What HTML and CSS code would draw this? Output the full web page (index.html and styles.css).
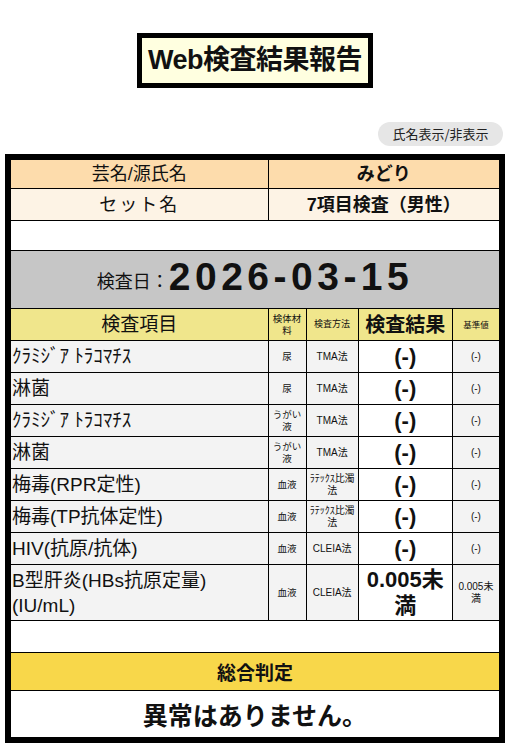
FILE: index.html
```html
<!DOCTYPE html>
<html lang="ja">
<head>
<meta charset="utf-8">
<title>Web検査結果報告</title>
<link rel="stylesheet" href="styles.css">
</head>
<body>
<header class="title-wrap">
  <h1 class="title">Web検査結果報告</h1>
</header>
<div class="toggle-wrap">
  <button class="toggle" type="button">氏名表示/非表示</button>
</div>
<div class="report">
  <table class="grid">
    <colgroup>
      <col class="c-item"><col class="c-sample"><col class="c-method"><col class="c-result"><col class="c-ref">
    </colgroup>
    <tbody>
      <tr class="r-name">
        <td class="lbl">芸名/源氏名</td>
        <td colspan="4" class="val">みどり</td>
      </tr>
      <tr class="r-set">
        <td class="lbl spaced">セット名</td>
        <td colspan="4" class="val">7項目検査（男性）</td>
      </tr>
      <tr class="r-blank"><td colspan="5"></td></tr>
      <tr class="r-date">
        <td colspan="5"><span class="date-lbl">検査日：</span><span class="date">2026-03-15</span></td>
      </tr>
      <tr class="r-head">
        <th class="h-item">検査項目</th>
        <th class="h-sample">検体材料</th>
        <th class="h-method">検査方法</th>
        <th class="h-result">検査結果</th>
        <th class="h-tiny">基準値</th>
      </tr>
      <tr class="r-data">
        <td class="item">ｸﾗﾐｼﾞｱ ﾄﾗｺﾏﾁｽ</td><td class="sm">尿</td><td class="md">TMA法</td><td class="res">(-)</td><td class="ref">(-)</td>
      </tr>
      <tr class="r-data">
        <td class="item">淋菌</td><td class="sm">尿</td><td class="md">TMA法</td><td class="res">(-)</td><td class="ref">(-)</td>
      </tr>
      <tr class="r-data">
        <td class="item">ｸﾗﾐｼﾞｱ ﾄﾗｺﾏﾁｽ</td><td class="sm">うがい液</td><td class="md">TMA法</td><td class="res">(-)</td><td class="ref">(-)</td>
      </tr>
      <tr class="r-data">
        <td class="item">淋菌</td><td class="sm">うがい液</td><td class="md">TMA法</td><td class="res">(-)</td><td class="ref">(-)</td>
      </tr>
      <tr class="r-data">
        <td class="item">梅毒(RPR定性)</td><td class="sm">血液</td><td class="md">ﾗﾃｯｸｽ比濁法</td><td class="res">(-)</td><td class="ref">(-)</td>
      </tr>
      <tr class="r-data">
        <td class="item">梅毒(TP抗体定性)</td><td class="sm">血液</td><td class="md">ﾗﾃｯｸｽ比濁法</td><td class="res">(-)</td><td class="ref">(-)</td>
      </tr>
      <tr class="r-data">
        <td class="item">HIV(抗原/抗体)</td><td class="sm">血液</td><td class="md">CLEIA法</td><td class="res">(-)</td><td class="ref">(-)</td>
      </tr>
      <tr class="r-data r-tall">
        <td class="item">B型肝炎(HBs抗原定量)(IU/mL)</td><td class="sm">血液</td><td class="md">CLEIA法</td><td class="res">0.005未満</td><td class="ref">0.005未満</td>
      </tr>
      <tr class="r-blank2"><td colspan="5"></td></tr>
      <tr class="r-judge"><td colspan="5">総合判定</td></tr>
      <tr class="r-verdict"><td colspan="5">異常はありません。</td></tr>
    </tbody>
  </table>
</div>
</body>
</html>
```
FILE: styles.css
```css
html, body {
  margin: 0;
  padding: 0;
  background: #fff;
}
body {
  font-family: "Liberation Sans", "Noto Sans CJK JP", sans-serif;
  color: #111;
  padding: 33px 5px 0 5px;
}
.title-wrap {
  display: flex;
  justify-content: center;
}
.title {
  margin: 0;
  box-sizing: border-box;
  width: 236px;
  height: 55px;
  border: 5px solid #000;
  background: #ffffe0;
  font-size: 27px;
  font-weight: bold;
  line-height: 45px;
  text-align: center;
  white-space: nowrap;
  letter-spacing: -0.5px;
}
.toggle-wrap {
  display: flex;
  justify-content: flex-end;
  margin-top: 34px;
  padding-right: 2px;
}
.toggle {
  font-family: "Noto Sans CJK JP", sans-serif;
  font-size: 13px;
  color: #222;
  background: #e6e6e6;
  border: none;
  border-radius: 12px;
  height: 24px;
  width: 125px;
  padding: 0;
  line-height: 24px;
}
.report {
  margin-top: 8px;
  border: 5px solid #000;
}
.grid {
  width: 100%;
  border-collapse: collapse;
  table-layout: fixed;
}
.c-item { width: 257px; }
.c-sample { width: 38px; }
.c-method { width: 52px; }
.c-result { width: 94px; }
.c-ref { width: 47px; }
.grid td, .grid th {
  border: 1px solid #000;
  padding: 0 1px;
  text-align: center;
  vertical-align: middle;
  font-weight: normal;
}
.r-name td {
  background: #fddcac;
  height: 28px;
  font-size: 18px;
  line-height: 22px;
}
.r-set td {
  background: #fdf3e5;
  height: 31px;
  font-size: 18px;
  line-height: 22px;
}
.grid .val { font-weight: bold; }
.spaced { letter-spacing: 2px; }
.r-blank td { height: 29px; background: #fff; }
.r-date td {
  background: #c6c6c6;
  height: 55px;
  line-height: 40px;
  padding-top: 2px;
}
.date-lbl {
  font-size: 18px;
  vertical-align: 2px;
}
.date {
  font-size: 39px;
  font-weight: bold;
  letter-spacing: 4.5px;
}
.r-head th {
  background: #f0e68c;
  height: 31px;
}
.grid .h-item { font-size: 19px; line-height: 22px; }
.grid .h-sample { font-size: 9.5px; line-height: 12px; }
.grid .h-method { font-size: 9px; line-height: 11px; }
.grid .h-result { font-size: 20px; font-weight: bold; line-height: 24px; }
.grid .h-tiny { font-size: 8.5px; line-height: 10px; }
.r-data td {
  background: #f3f3f3;
  height: 31px;
}
.r-data.r-tall td { height: 55px; }
.grid .item {
  text-align: left;
  font-size: 19px;
  line-height: 25px;
  padding-left: 1px;
}
.grid .sm {
  font-size: 9.5px;
  line-height: 12px;
}
.grid .md {
  font-size: 10px;
  line-height: 12px;
}
.grid .res {
  background: #fff;
  font-size: 22px;
  font-weight: bold;
  line-height: 26px;
}
.grid .ref {
  font-size: 10px;
  line-height: 12px;
}
.r-blank2 td { height: 31px; background: #fff; }
.r-judge td {
  background: #f8d74a;
  height: 37px;
  font-size: 19px;
  font-weight: bold;
}
.r-verdict td {
  background: #fff;
  height: 46px;
  font-size: 25px;
  font-weight: bold;
}
```
